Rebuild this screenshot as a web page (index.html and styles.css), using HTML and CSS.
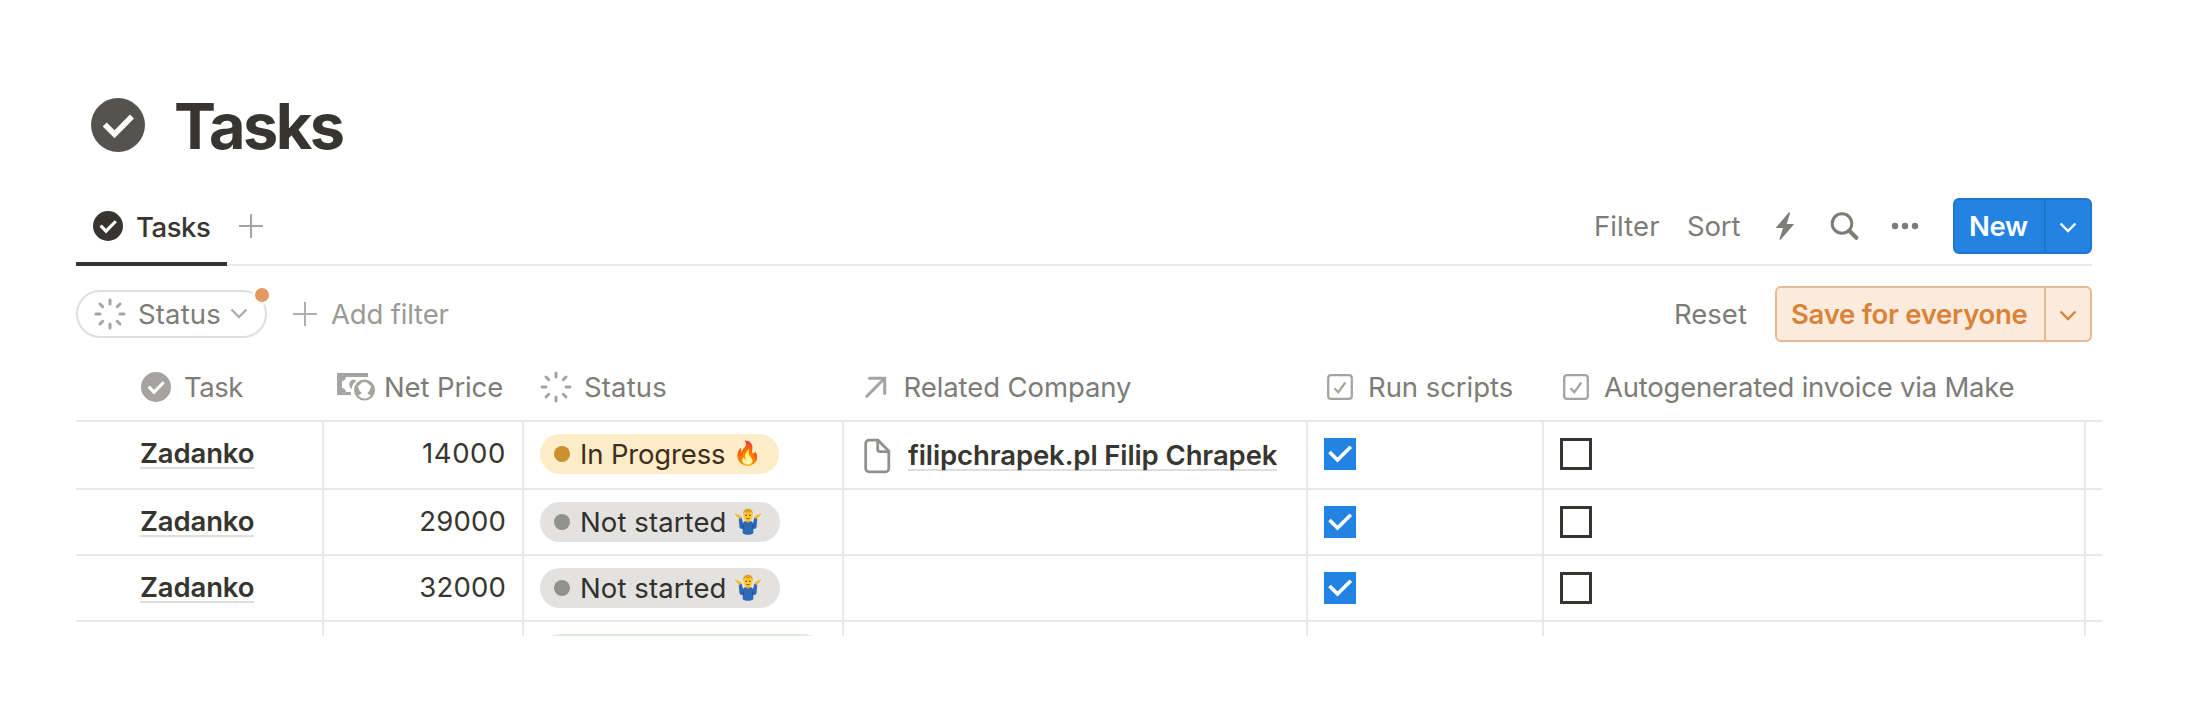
FILE: index.html
```html
<!DOCTYPE html>
<html lang="en">
<head>
<meta charset="utf-8">
<title>Tasks</title>
<link rel="stylesheet" href="styles.css">
</head>
<body>
<svg class="defs" width="0" height="0">
  <symbol id="check-circle" viewBox="0 0 54 54"><circle cx="27" cy="27" r="27"/><path class="tick" d="M13.7 26.5 23.5 36.3 41 18.5"/></symbol>
  <symbol id="plus" viewBox="0 0 24 24"><path d="M12 0v24M0 12h24"/></symbol>
  <symbol id="spinner" viewBox="0 0 32 32"><path d="M16 2v4M16 26v4M2 16h4M26 16h4M6 6l2.700 2.700M23.300 23.300 26 26M26 6l-2.700 2.700M8.700 23.300 6 26"/></symbol>
  <symbol id="chevron" viewBox="0 0 18 12"><path d="M1.500 1.500 9 9l7.500-7.500"/></symbol>
  <symbol id="box-check" viewBox="0 0 26 26"><rect x="1.200" y="1.200" width="23.600" height="23.600" rx="2.800"/><path d="M7.500 14.300 11.300 18.300 18.300 8.500"/></symbol>
  <symbol id="tick" viewBox="0 0 32 32"><path d="M5.500 14 13.500 22 26.800 8.700"/></symbol>
  <symbol id="shrug" viewBox="0 0 28 28">
    <path fill="#f7b928" d="M.8 5.500c.6-.6 1.300.2 1.800.8l1.800.4c1.300.2 2.500 1.300 3 2.700L5.300 11.500 3.600 9.300C2.300 8.300.9 6.600.8 5.500zM27.200 5.500c-.6-.6-1.300.2-1.800.8l-1.800.4c-1.300.2-2.500 1.300-3 2.700l2.100 2.100 1.700-2.200c1.300-1 2.700-2.700 2.800-3.800z"/>
    <path fill="#2f68b5" d="M4.800 11.300 7.600 9.500 9 15c1-1.600 2.500-2.300 5-2.300s4 .7 5 2.300l1.400-5.500 2.800 1.800-.6 7.500c-.2 1.800-1.700 2.700-3.100 1.700l-.3 5c-2.700 1.800-7.700 1.800-10.400 0l-.3-5c-1.400 1-2.900.1-3.100-1.700z"/>
    <path fill="#21518f" d="M8.600 16.500l.5 5M19.400 16.500l-.5 5-1-1 .5-3zM9.600 17.500l.5 3-1 1-.5-5z"/>
    <path fill="#e9a51f" d="M11.800 11.500h4.400v2c-1 1.500-3.400 1.500-4.400 0z"/>
    <ellipse cx="14" cy="7.800" rx="4.500" ry="5.500" fill="#fcc935"/>
    <path fill="#e0a21a" d="M9.300 7c-.7-4 1.300-6.300 4.700-6.300S19.400 3 18.700 7l-.9-2.700c-2.500.3-5.100.3-7.600 0z"/>
    <circle cx="12.200" cy="7.300" r=".8" fill="#55391a"/><circle cx="15.800" cy="7.300" r=".8" fill="#55391a"/>
    <path fill="#8a4a17" d="M12.300 10.200h3.400v.9h-3.400z"/>
  </symbol>
</svg>
<main class="page">
  <header class="title">
    <svg class="title-icon"><use href="#check-circle"/></svg>
    <h1>Tasks</h1>
  </header>

  <nav class="tabs">
    <div class="tab"><svg class="tab-icon"><use href="#check-circle"/></svg><span>Tasks</span></div>
    <svg class="plus"><use href="#plus"/></svg>
    <div class="tools">
      <span class="t-filter">Filter</span>
      <span class="t-sort">Sort</span>
      <svg class="t-bolt" viewBox="0 0 22 30"><path d="M14.800 1.500 2.200 16.300a.4.4 0 0 0 .3.700H9L5.500 27.800c-.3 1 .6 1.300 1.200.600L19.600 13.800a.4.4 0 0 0-.3-.700h-6.600L16 2.200c.3-1-.6-1.400-1.200-.7z"/></svg>
      <svg class="t-search" viewBox="0 0 30 30"><circle cx="12" cy="12.500" r="9.800"/><path class="handle" d="m19.300 19.800 7 7"/></svg>
      <svg class="t-dots" viewBox="0 0 28 8"><circle cx="4" cy="4" r="3.200"/><circle cx="14" cy="4" r="3.200"/><circle cx="24" cy="4" r="3.200"/></svg>
      <div class="split new"><span>New</span><i><svg class="chev"><use href="#chevron"/></svg></i></div>
    </div>
  </nav>

  <section class="filters">
    <div class="pill"><svg class="spinner"><use href="#spinner"/></svg><span>Status</span><svg class="chev"><use href="#chevron"/></svg><b class="dot"></b></div>
    <svg class="plus"><use href="#plus"/></svg>
    <span class="add">Add filter</span>
    <span class="reset">Reset</span>
    <div class="split save"><span>Save for everyone</span><i><svg class="chev"><use href="#chevron"/></svg></i></div>
  </section>

  <section class="table">
    <div class="row head">
      <div class="h-task"><svg class="tab-icon"><use href="#check-circle"/></svg><span>Task</span></div>
      <div class="h-price"><svg class="money" viewBox="0 0 38 28">
        <path fill-rule="evenodd" d="M0 0h31v4H9c0 2-2 4-4 4v7c2 0 4 2 4 4h5v3H0z"/>
        <path d="M14.500 16c-3-2-3-8.500 1.200-9.200 1.800-.3 3 .4 3.800 1.200-3 1.800-4.300 4.600-5 8z"/>
        <circle cx="27.500" cy="17" r="10.500"/>
        <path class="cut" d="M27.500 9c2.300 0 3.700 1.300 4.600 2.700l2 1.300-1 3.300c-.6 2-1.600 2.700-2.600 3.200 0 1.800 2 2 3.300 3A8.600 8.600 0 0 1 27.500 25.600a8.600 8.600 0 0 1-6.300-3.100c1.300-1 3.300-1.200 3.300-3-1-.5-2-1.200-2.600-3.200l-1-3.300 2-1.300C23.800 10.300 25.200 9 27.500 9z"/>
      </svg><span>Net Price</span></div>
      <div class="h-status"><svg class="spinner"><use href="#spinner"/></svg><span>Status</span></div>
      <div class="h-company"><svg class="arrow" viewBox="0 0 22 22"><path d="M1.800 20.200 19.200 2.800M4.500 2.300H19.700V17.500"/></svg><span>Related Company</span></div>
      <div class="h-run"><svg class="boxcheck"><use href="#box-check"/></svg><span>Run scripts</span></div>
      <div class="h-auto"><svg class="boxcheck"><use href="#box-check"/></svg><span>Autogenerated invoice via Make</span></div>
    </div>
    <div class="row first">
      <div class="task"><a>Zadanko</a></div>
      <div class="price p14">14000</div>
      <div class="status"><span class="tag yellow"><b></b><span>In Progress</span><em>🔥</em></span></div>
      <div class="company"><svg class="doc" viewBox="0 0 28 36"><path d="M6 2.200h9L25.800 13v17.500a3.300 3.300 0 0 1-3.300 3.300H6a3.300 3.300 0 0 1-3.300-3.300v-25A3.300 3.300 0 0 1 6 2.200z"/><path d="M14.700 2.500v9a2.200 2.200 0 0 0 2.200 2.200h8.700"/></svg><a>filipchrapek.pl Filip Chrapek</a></div>
      <div class="check"><svg class="checked"><use href="#tick"/></svg></div>
      <div class="check"><span class="empty"></span></div>
      <div></div>
    </div>
    <div class="row">
      <div class="task"><a>Zadanko</a></div>
      <div class="price">29000</div>
      <div class="status"><span class="tag gray"><b></b><span>Not started</span><svg class="shrug"><use href="#shrug"/></svg></span></div>
      <div></div>
      <div class="check"><svg class="checked"><use href="#tick"/></svg></div>
      <div class="check"><span class="empty"></span></div>
      <div></div>
    </div>
    <div class="row">
      <div class="task"><a>Zadanko</a></div>
      <div class="price">32000</div>
      <div class="status"><span class="tag gray"><b></b><span>Not started</span><svg class="shrug"><use href="#shrug"/></svg></span></div>
      <div></div>
      <div class="check"><svg class="checked"><use href="#tick"/></svg></div>
      <div class="check"><span class="empty"></span></div>
      <div></div>
    </div>
    <div class="row last">
      <div></div><div></div>
      <div class="status"><span class="tag green"></span></div>
      <div></div><div></div><div></div><div></div>
    </div>
  </section>
</main>
</body>
</html>
```
FILE: styles.css
```css
* { box-sizing: border-box; }
body { margin: 0; background: #fff; color: #37352f; font: 400 27.5px/28px Inter, sans-serif; white-space: nowrap; }
svg { display: block; flex: none; fill: none; stroke: currentColor; stroke-width: 2.4; }
.defs { position: absolute; }
.page { width: 2026px; margin-left: 76px; padding-top: 98px; }

.title { display: flex; height: 88px; padding-left: 15px; align-items: flex-start; }
.title-icon { width: 54px; height: 54px; fill: #55534e; stroke: none; }
h1 { margin: 1px 0 0 29px; font-size: 63px; line-height: 54px; font-weight: 700; letter-spacing: -2.55px; }
.tick { fill: none; stroke: #fff; stroke-width: 5.6; }

.tabs { display: flex; width: 2016px; height: 80px; align-items: center; box-shadow: inset 0 -2px #e9e9e7; }
.tab { display: flex; width: 151px; height: 80px; padding: 4px 0 0 17px; align-items: center; border-bottom: 4px solid #37352f; font-weight: 500; letter-spacing: -.44px; }
.tab span { margin: 2px 0 0 13px; }
.tab-icon { width: 30px; height: 30px; fill: #37352f; stroke: none; }
.plus { width: 24px; height: 24px; margin-left: 12px; color: #a5a4a0; stroke-width: 2; }
.tools { display: flex; margin-left: auto; align-items: center; color: #7d7c78; }
.t-filter { width: 93px; letter-spacing: .1px; }
.t-sort { width: 87px; letter-spacing: -.14px; }
.t-bolt { width: 22px; height: 30px; fill: currentColor; stroke: none; }
.t-search { width: 30px; height: 30px; margin-left: 34px; stroke-width: 3; }
.handle { stroke-width: 4.2; stroke-linecap: round; }
.t-dots { width: 28px; height: 8px; margin: 0 34px 0 31px; fill: currentColor; stroke: none; }

.split { display: flex; height: 56px; border: 2px solid; border-radius: 6px; font-weight: 600; align-items: center; }
.split i { display: flex; align-items: center; justify-content: center; width: 46px; height: 52px; border-left: 2px solid; padding-top: 4px; }
.chev { width: 18px; height: 12px; }
.new { width: 139px; background: #2383e2; border-color: #2076cb; color: #fff; letter-spacing: -.36px; }
.new span { flex: 1; padding-left: 14px; }
.new i { border-color: #2076cb; }

.filters { display: flex; width: 2016px; height: 56px; margin-top: 20px; align-items: center; }
.pill { position: relative; display: flex; width: 191px; height: 48px; padding-left: 16px; align-items: center; border: 2px solid #dfdfde; border-radius: 24px; color: #7d7c78; }
.pill span { width: 92px; margin-left: 12px; letter-spacing: .15px; }
.pill .chev { color: #b0afab; }
.spinner { width: 32px; height: 32px; color: #a5a4a0; stroke-width: 3; stroke-linecap: round; }
.dot { position: absolute; right: -7px; top: -7px; width: 20px; height: 20px; border: 3px solid #fff; border-radius: 50%; background: #e3995f; }
.filters .plus { margin-left: 26px; color: #b0afab; }
.add { margin-left: 14px; color: #9b9a97; letter-spacing: -.17px; }
.reset { margin-left: auto; width: 101px; color: #7d7c78; }
.save { width: 317px; background: #fbebdd; border-color: #ebb894; color: #d9833a; letter-spacing: -.27px; }
.save span { flex: 1; padding-left: 14px; }
.save i { border-color: #ebb894; }

.table { margin-top: 12px; }
.row { display: grid; grid-template-columns: 248px 200px 320px 464px 236px 542px 16px; height: 66px; border-bottom: 2px solid #e9e9e7; }
.row > div { border-right: 2px solid #e9e9e7; display: flex; align-items: flex-start; }
.row > div:last-child { border-right: 0; }
.first, .head { height: 68px; }
.last { height: 14px; overflow: hidden; border-bottom: 0; }
.head { color: #7d7c78; }
.row.head > div { border: 0; align-items: center; }
.head .tab-icon { fill: #a5a4a0; }
.h-task { padding-left: 65px; letter-spacing: -.5px; }
.h-task span { margin-left: 13px; }
.h-price { padding-left: 13px; letter-spacing: -.13px; }
.h-price span { margin-left: 9px; }
.money { width: 38px; height: 28px; fill: #a5a4a0; stroke: none; }
.cut { fill: #fff; }
.h-status { padding-left: 16px; letter-spacing: .15px; }
.h-status span { margin-left: 12px; }
.h-company { padding-left: 21px; letter-spacing: -.09px; }
.h-company span { margin-left: 16.5px; }
.arrow { width: 22px; height: 22px; color: #a5a4a0; stroke-width: 3; stroke-linecap: round; }
.h-run, .h-auto { padding-left: 19px; }
.h-run span { margin-left: 15px; letter-spacing: -.05px; }
.h-auto span { margin-left: 15px; letter-spacing: -.22px; }
.boxcheck { width: 26px; height: 26px; color: #a5a4a0; stroke-width: 2.3; }

.row a { border-bottom: 2px solid #dededc; font-weight: 600; }
.task { padding: 17px 0 0 64px; letter-spacing: -.13px; }
.row > .price { justify-content: flex-end; padding: 17px 16px 0 0; letter-spacing: .18px; }
.row > .p14 { letter-spacing: .6px; }
.status { padding: 12px 0 0 16px; }
.tag { display: flex; width: 240px; height: 40px; padding-left: 14px; align-items: center; border-radius: 20px; }
.tag b { width: 16px; height: 16px; border-radius: 50%; }
.tag span { width: 153px; margin-left: 10px; }
.tag em { font: 23px/28px "Noto Color Emoji", sans-serif; }
.shrug { width: 28px; height: 28px; margin-left: 1px; stroke: none; }
.yellow { width: 239px; background: #fdecc8; color: #402c1b; letter-spacing: -.16px; }
.yellow b { background: #cb912f; }
.gray { background: #e3e2e0; color: #32302c; letter-spacing: .1px; }
.gray b { background: #91918e; }
.green { width: 284px; background: #dbeddb; }
.company { padding-left: 19px; }
.doc { width: 28px; height: 36px; margin-top: 16px; color: #91918e; stroke-width: 2.8; }
.company a { margin: 19px 0 0 17px; letter-spacing: -.11px; }
.check { padding: 16px 0 0 16px; }
.checked { width: 32px; height: 32px; background: #2383e2; color: #fff; stroke-width: 3.6; }
.empty { width: 32px; height: 32px; border: 3px solid #37352f; }
```
